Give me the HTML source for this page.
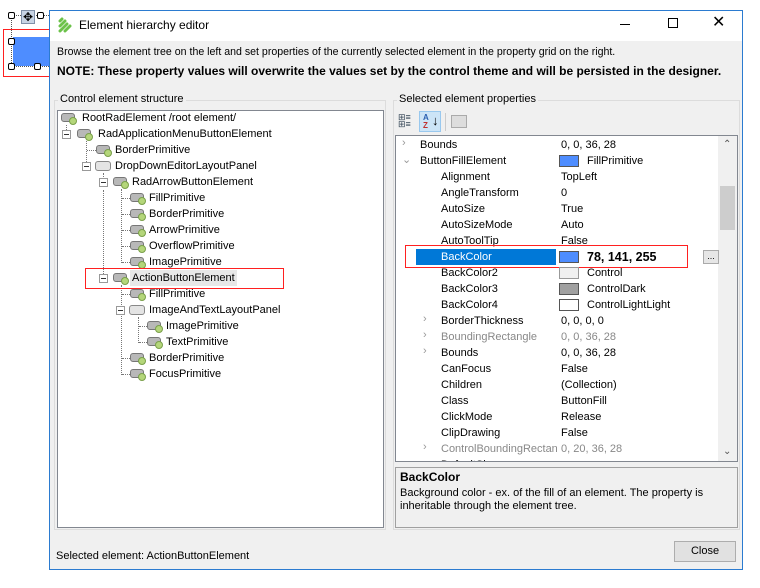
<!DOCTYPE html>
<html><head><meta charset="utf-8"><style>
*{margin:0;padding:0;box-sizing:border-box}
body{width:760px;height:588px;background:#fff;position:relative;overflow:hidden;font-family:"Liberation Sans",sans-serif;font-size:11px;color:#000}
.a{position:absolute;white-space:nowrap}
.t{position:absolute;white-space:nowrap;line-height:16px;height:16px}
.ic{position:absolute;width:14px;height:9px;background:#b8b8b8;border:1px solid #777;border-radius:3px}
.ic:after{content:"";position:absolute;right:-3px;bottom:-4px;width:6px;height:6px;border-radius:50%;background:#b4d67a;border:1px solid #7aa04a}
.pn{position:absolute;width:16px;height:10px;background:#e4e4e4;border:1px solid #888;border-radius:3px}
.mn{position:absolute;width:9px;height:9px;border:1px solid #999;background:#fff}
.mn:after{content:"";position:absolute;left:1px;top:3px;width:5px;height:1px;background:#333}
.dv{position:absolute;border-left:1px dotted #777}
.dh{position:absolute;border-top:1px dotted #777}
.g{color:#888}
.sw{position:absolute;width:20px;height:12px;border:1px solid #555}
.ch{position:absolute;color:#999;font-size:11px}
.red{position:absolute;border:1px solid #ff2020}
</style></head><body>
<!-- designer surface -->
<div class="a" style="left:13px;top:37px;width:37px;height:29px;background:#4e8dff"></div>
<div class="a" style="left:11px;top:15px;width:40px;height:52px;border:1px dotted #555;border-right:none"></div>
<div class="a" style="left:8px;top:12px;width:7px;height:7px;border:1px solid #000;background:#fff;border-radius:2px"></div>
<div class="a" style="left:37px;top:12px;width:7px;height:7px;border:1px solid #000;background:#fff;border-radius:2px"></div>
<div class="a" style="left:8px;top:38px;width:7px;height:7px;border:1px solid #000;background:#fff;border-radius:2px"></div>
<div class="a" style="left:8px;top:63px;width:7px;height:7px;border:1px solid #000;background:#fff;border-radius:2px"></div>
<div class="a" style="left:34px;top:63px;width:7px;height:7px;border:1px solid #000;background:#fff;border-radius:2px"></div>
<div class="a" style="left:21px;top:10px;width:14px;height:14px;background:#c8d4e4;border:1px solid #8090a8;font-size:12px;line-height:12px;text-align:center">✥</div>
<div class="red" style="left:3px;top:29px;width:66px;height:48px"></div>

<!-- window -->
<div class="a" style="left:49px;top:10px;width:694px;height:560px;border:1px solid #2b7bd0;background:#f0f0f0">
 <div class="a" style="left:0;top:0;width:692px;height:30px;background:#fff"></div>
</div>
<svg class="a" style="left:57px;top:17px" width="18" height="16" viewBox="0 0 18 16"><path d="M3 14 L10 7 M3 9 L8 4 M8 14 L13 9 M3 4 L5 2" stroke="#6cc24a" stroke-width="3" fill="none" stroke-linecap="round"/></svg>
<div class="a" style="left:79px;top:18px;font-size:12px">Element hierarchy editor</div>
<div class="a" style="left:620px;top:24px;width:10px;height:1px;background:#000"></div>
<div class="a" style="left:668px;top:18px;width:10px;height:10px;border:1px solid #000"></div>
<div class="a" style="left:712px;top:14px;font-size:16px;line-height:18px">✕</div>

<div class="a" style="left:57px;top:46px;font-size:10.6px">Browse the element tree on the left and set properties of the currently selected element in the property grid on the right.</div>
<div class="a" style="left:57px;top:64px;font-weight:bold;font-size:12px">NOTE: These property values will overwrite the values set by the control theme and will be persisted in the designer.</div>

<!-- left group -->
<div class="a" style="left:54px;top:100px;width:332px;height:430px;border:1px solid #dcdcdc"></div>
<div class="a" style="left:58px;top:93px;background:#f0f0f0;padding:0 2px">Control element structure</div>
<div class="a" style="left:57px;top:110px;width:327px;height:418px;border:1px solid #828790;background:#fff"></div>

<!-- tree lines -->
<div class="dv" style="left:66px;top:125px;height:9px"></div>
<div class="dv" style="left:86px;top:141px;height:25px"></div>
<div class="dh" style="left:87px;top:150px;width:9px"></div>
<div class="dv" style="left:103px;top:173px;height:10px"></div>
<div class="dv" style="left:103px;top:190px;height:90px"></div>
<div class="dv" style="left:121px;top:189px;height:74px"></div>
<div class="dh" style="left:122px;top:198px;width:8px"></div>
<div class="dh" style="left:122px;top:214px;width:8px"></div>
<div class="dh" style="left:122px;top:230px;width:8px"></div>
<div class="dh" style="left:122px;top:246px;width:8px"></div>
<div class="dh" style="left:122px;top:262px;width:8px"></div>
<div class="dv" style="left:121px;top:285px;height:90px"></div>
<div class="dh" style="left:122px;top:294px;width:8px"></div>
<div class="dh" style="left:122px;top:358px;width:8px"></div>
<div class="dh" style="left:122px;top:374px;width:8px"></div>
<div class="dv" style="left:138px;top:317px;height:26px"></div>
<div class="dh" style="left:139px;top:326px;width:8px"></div>
<div class="dh" style="left:139px;top:342px;width:8px"></div>

<div class="ic" style="left:61px;top:113px"></div><div class="t" style="left:82px;top:110px">RootRadElement /root element/</div>
<div class="mn" style="left:62px;top:130px"></div><div class="ic" style="left:77px;top:129px"></div><div class="t" style="left:98px;top:126px">RadApplicationMenuButtonElement</div>
<div class="ic" style="left:96px;top:145px"></div><div class="t" style="left:115px;top:142px">BorderPrimitive</div>
<div class="mn" style="left:82px;top:162px"></div><div class="pn" style="left:95px;top:161px"></div><div class="t" style="left:115px;top:158px">DropDownEditorLayoutPanel</div>
<div class="mn" style="left:99px;top:178px"></div><div class="ic" style="left:113px;top:177px"></div><div class="t" style="left:132px;top:174px">RadArrowButtonElement</div>
<div class="ic" style="left:130px;top:193px"></div><div class="t" style="left:149px;top:190px">FillPrimitive</div>
<div class="ic" style="left:130px;top:209px"></div><div class="t" style="left:149px;top:206px">BorderPrimitive</div>
<div class="ic" style="left:130px;top:225px"></div><div class="t" style="left:149px;top:222px">ArrowPrimitive</div>
<div class="ic" style="left:130px;top:241px"></div><div class="t" style="left:149px;top:238px">OverflowPrimitive</div>
<div class="ic" style="left:130px;top:257px"></div><div class="t" style="left:149px;top:254px">ImagePrimitive</div>
<div class="mn" style="left:99px;top:274px"></div><div class="ic" style="left:113px;top:273px"></div><div class="t" style="left:130px;top:270px;background:#e8e8e8;padding:0 2px">ActionButtonElement</div>
<div class="red" style="left:85px;top:268px;width:199px;height:21px"></div>
<div class="ic" style="left:130px;top:289px"></div><div class="t" style="left:149px;top:286px">FillPrimitive</div>
<div class="mn" style="left:116px;top:306px"></div><div class="pn" style="left:129px;top:305px"></div><div class="t" style="left:149px;top:302px">ImageAndTextLayoutPanel</div>
<div class="ic" style="left:147px;top:321px"></div><div class="t" style="left:166px;top:318px">ImagePrimitive</div>
<div class="ic" style="left:147px;top:337px"></div><div class="t" style="left:166px;top:334px">TextPrimitive</div>
<div class="ic" style="left:130px;top:353px"></div><div class="t" style="left:149px;top:350px">BorderPrimitive</div>
<div class="ic" style="left:130px;top:369px"></div><div class="t" style="left:149px;top:366px">FocusPrimitive</div>

<!-- right group -->
<div class="a" style="left:393px;top:100px;width:347px;height:430px;border:1px solid #dcdcdc"></div>
<div class="a" style="left:397px;top:93px;background:#f0f0f0;padding:0 2px">Selected element properties</div>
<div class="a" style="left:398px;top:114px;width:18px;height:16px;font-size:9px;line-height:7px;color:#345">⊞≡<br>⊞≡</div>
<div class="a" style="left:419px;top:111px;width:22px;height:21px;background:#cce4f7;border:1px solid #99c8ee;font-size:8px;line-height:8px;padding:2px 0 0 3px;color:#2b5fb0;font-weight:bold">A<br><span style="color:#c03030">Z</span></div>
<div class="a" style="left:432px;top:113px;font-size:13px">↓</div>
<div class="a" style="left:445px;top:113px;width:1px;height:18px;background:#ccc"></div>
<div class="a" style="left:451px;top:115px;width:16px;height:13px;border:1px solid #aaa;background:#ddd"></div>

<div class="a" style="left:395px;top:135px;width:343px;height:327px;border:1px solid #828790;background:#fff;overflow:hidden">
 <div class="a" style="left:322px;top:0;width:19px;height:325px;background:#f0f0f0"></div>
 <div class="a" style="left:324px;top:50px;width:15px;height:44px;background:#cdcdcd"></div>
 <div class="a" style="left:327px;top:3px;color:#555;font-size:10px">⌃</div>
 <div class="a" style="left:327px;top:310px;color:#555;font-size:10px">⌄</div>
</div>
<div class="ch" style="left:402px;top:137px">›</div><div class="t" style="left:420px;top:137px">Bounds</div><div class="t" style="left:561px;top:137px">0, 0, 36, 28</div>
<div class="ch" style="left:402px;top:153px">⌄</div><div class="t" style="left:420px;top:153px">ButtonFillElement</div><div class="sw" style="left:559px;top:155px;background:#4e8dff"></div><div class="t" style="left:587px;top:153px">FillPrimitive</div>
<div class="t" style="left:441px;top:169px">Alignment</div><div class="t" style="left:561px;top:169px">TopLeft</div>
<div class="t" style="left:441px;top:185px">AngleTransform</div><div class="t" style="left:561px;top:185px">0</div>
<div class="t" style="left:441px;top:201px">AutoSize</div><div class="t" style="left:561px;top:201px">True</div>
<div class="t" style="left:441px;top:217px">AutoSizeMode</div><div class="t" style="left:561px;top:217px">Auto</div>
<div class="t" style="left:441px;top:233px">AutoToolTip</div><div class="t" style="left:561px;top:233px">False</div>
<div class="a" style="left:416px;top:249px;width:140px;height:16px;background:#0078d7"></div>
<div class="t" style="left:441px;top:249px;color:#fff">BackColor</div>
<div class="a" style="left:557px;top:249px;width:160px;height:16px;background:#fff"></div>
<div class="sw" style="left:559px;top:251px;background:#4e8dff"></div><div class="t" style="left:587px;top:249px;font-weight:bold;font-size:12.5px">78, 141, 255</div>
<div class="a" style="left:703px;top:250px;width:16px;height:14px;border:1px solid #aaa;background:#e6e6e6;font-size:9px;line-height:10px;text-align:center">...</div>
<div class="red" style="left:405px;top:245px;width:283px;height:23px"></div>
<div class="t" style="left:441px;top:265px">BackColor2</div><div class="sw" style="left:559px;top:267px;background:#f0f0f0;border-color:#999"></div><div class="t" style="left:587px;top:265px">Control</div>
<div class="t" style="left:441px;top:281px">BackColor3</div><div class="sw" style="left:559px;top:283px;background:#a0a0a0"></div><div class="t" style="left:587px;top:281px">ControlDark</div>
<div class="t" style="left:441px;top:297px">BackColor4</div><div class="sw" style="left:559px;top:299px;background:#fff"></div><div class="t" style="left:587px;top:297px">ControlLightLight</div>
<div class="ch" style="left:423px;top:313px">›</div><div class="t" style="left:441px;top:313px">BorderThickness</div><div class="t" style="left:561px;top:313px">0, 0, 0, 0</div>
<div class="ch" style="left:423px;top:329px">›</div><div class="t g" style="left:441px;top:329px">BoundingRectangle</div><div class="t g" style="left:561px;top:329px">0, 0, 36, 28</div>
<div class="ch" style="left:423px;top:345px">›</div><div class="t" style="left:441px;top:345px">Bounds</div><div class="t" style="left:561px;top:345px">0, 0, 36, 28</div>
<div class="t" style="left:441px;top:361px">CanFocus</div><div class="t" style="left:561px;top:361px">False</div>
<div class="t" style="left:441px;top:377px">Children</div><div class="t" style="left:561px;top:377px">(Collection)</div>
<div class="t" style="left:441px;top:393px">Class</div><div class="t" style="left:561px;top:393px">ButtonFill</div>
<div class="t" style="left:441px;top:409px">ClickMode</div><div class="t" style="left:561px;top:409px">Release</div>
<div class="t" style="left:441px;top:425px">ClipDrawing</div><div class="t" style="left:561px;top:425px">False</div>
<div class="ch" style="left:423px;top:441px">›</div><div class="t g" style="left:441px;top:441px;width:116px;overflow:hidden">ControlBoundingRectangle</div><div class="t g" style="left:561px;top:441px">0, 20, 36, 28</div>
<div class="a" style="left:396px;top:457px;width:320px;height:4px;overflow:hidden"><div class="t" style="left:45px;top:0">DefaultSize</div></div>

<div class="a" style="left:395px;top:467px;width:343px;height:61px;border:1px solid #a0a0a0;background:#f0f0f0"></div>
<div class="a" style="left:400px;top:470px;font-weight:bold;font-size:12px">BackColor</div>
<div class="a" style="left:400px;top:487px;line-height:13px">Background color - ex. of the fill of an element. The property is<br>inheritable through the element tree.</div>

<div class="a" style="left:56px;top:550px">Selected element: ActionButtonElement</div>
<div class="a" style="left:674px;top:541px;width:62px;height:21px;border:1px solid #adadad;background:#e1e1e1;text-align:center;line-height:19px;font-size:11px">Close</div>
</body></html>
